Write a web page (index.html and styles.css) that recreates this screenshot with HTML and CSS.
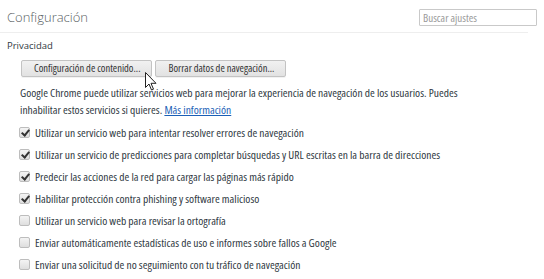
FILE: index.html
```html
<!DOCTYPE html>
<html lang="es">
<head>
<meta charset="utf-8">
<link rel="stylesheet" href="styles.css">
</head>
<body>
<header class="top">
  <h1 class="title">Configuración</h1>
  <input class="search" type="text" placeholder="Buscar ajustes">
</header>
<section class="section">
  <h3 class="section-title">Privacidad</h3>
  <div class="section-body">
    <div class="buttons">
      <button class="btn">Configuración de contenido...</button>
      <button class="btn">Borrar datos de navegación...</button>
    </div>
    <p class="desc">Google Chrome puede utilizar servicios web para mejorar la experiencia de navegación de los usuarios. Puedes inhabilitar estos servicios si quieres. <a href="#" class="link">Más información</a></p>
    <ul class="checks">
      <li class="row"><span class="box checked"></span>Utilizar un servicio web para intentar resolver errores de navegación</li>
      <li class="row"><span class="box checked"></span>Utilizar un servicio de predicciones para completar búsquedas y URL escritas en la barra de direcciones</li>
      <li class="row"><span class="box checked"></span>Predecir las acciones de la red para cargar las páginas más rápido</li>
      <li class="row"><span class="box checked"></span>Habilitar protección contra phishing y software malicioso</li>
      <li class="row"><span class="box"></span>Utilizar un servicio web para revisar la ortografía</li>
      <li class="row"><span class="box"></span>Enviar automáticamente estadísticas de uso e informes sobre fallos a Google</li>
      <li class="row"><span class="box"></span>Enviar una solicitud de no seguimiento con tu tráfico de navegación</li>
    </ul>
  </div>
</section>
<svg class="cursor" width="12" height="19" viewBox="0 0 12 19"><path d="M0.5 0.5 L0.5 15.5 L4 12 L6.5 18 L8.5 17.2 L6 11.3 L11 11.3 Z" fill="#fff" stroke="#222" stroke-width="1"/></svg>
</body>
</html>
```
FILE: styles.css
```css
html, body { margin: 0; padding: 0; background: #fff; }
body {
  font-family: "Open Sans", "Noto Sans", sans-serif;
  font-stretch: 87.5%;
  font-size: 11.5px;
  color: #303942;
  position: relative;
  width: 544px;
  height: 279px;
  overflow: hidden;
}
.top {
  display: flex;
  justify-content: space-between;
  align-items: center;
  width: 528px;
  height: 33px;
  padding: 0 0 0 7px;
  box-sizing: border-box;
  border-bottom: 1px solid #eeeeee;
}
.title {
  margin: 0;
  font-weight: 300;
  font-stretch: 100%;
  font-size: 13px;
  color: #5a5f64;
  line-height: 1;
  position: relative;
  top: 1px;
}
.search {
  width: 118px;
  height: 17px;
  box-sizing: border-box;
  border: 1px solid #c9c9c9;
  border-radius: 1px;
  font: inherit;
  font-size: 11px;
  padding: 0 3px;
  margin-right: -9px;
  margin-top: 3px;
}
.search::placeholder { color: #9a9a9a; }
.section { padding: 5px 0 0 7px; }
.section-title {
  margin: 0;
  font-size: 9.5px;
  font-stretch: 100%;
  font-weight: 400;
  color: #303942;
  line-height: 16px;
}
.section-body { padding-left: 13px; }
.buttons { display: flex; gap: 3px; margin: 6px 0 0 1px; }
.btn {
  font: inherit;
  font-size: 10.5px;
  color: #333;
  height: 17px;
  padding: 0 11px 0 12px;
  border: 1px solid #c3c3c3;
  border-radius: 2px;
  background: linear-gradient(#f1f1f1, #e2e2e2);
  box-shadow: 0 1px 0 rgba(0,0,0,0.05);
  line-height: 15px;
}
.desc {
  margin: 7px 0 0 0;
  line-height: 17px;
  width: 445px;
}
.link { color: #1b5fb6; text-decoration: underline; }
.checks { list-style: none; margin: 3px 0 0 -1px; padding: 0; }
.row {
  display: flex;
  align-items: center;
  height: 22px;
}
.box {
  width: 11px;
  height: 11px;
  box-sizing: border-box;
  border: 1px solid #bdbdbd;
  border-radius: 2px;
  background: linear-gradient(#f4f4f4, #dedede);
  margin-right: 5px;
  position: relative;
  flex: none;
}
.box.checked::after {
  content: "";
  position: absolute;
  left: 3px;
  top: 0px;
  width: 3px;
  height: 6px;
  border: solid #333;
  border-width: 0 2px 2px 0;
  transform: rotate(40deg);
}
.cursor { position: absolute; left: 145px; top: 72px; }
```
